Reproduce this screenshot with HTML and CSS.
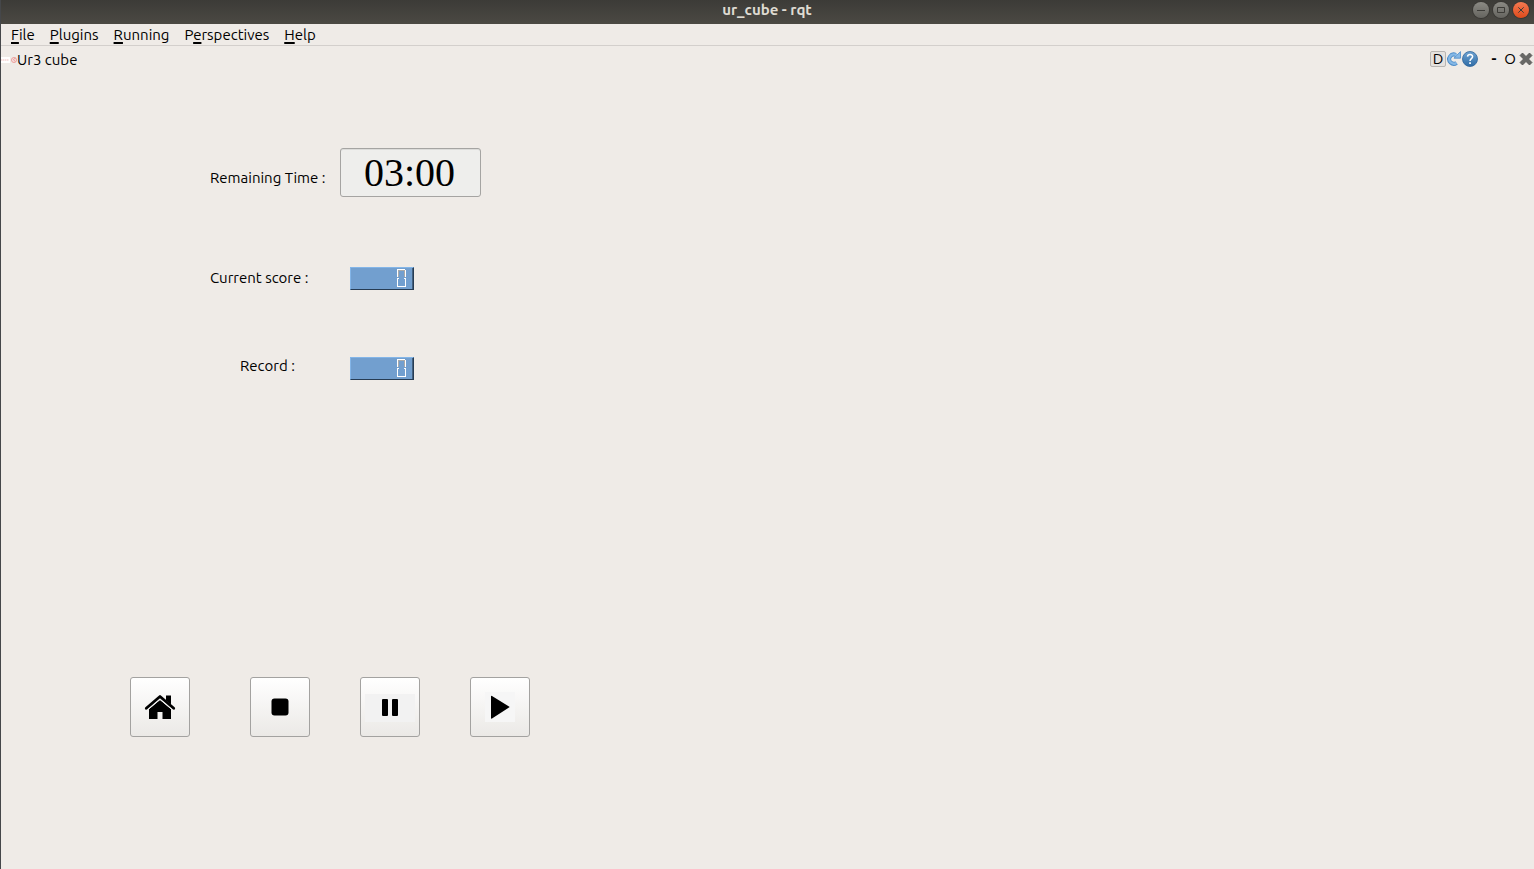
FILE: index.html
```html
<!DOCTYPE html>
<html lang="en">
<head>
<meta charset="utf-8">
<title>ur_cube - rqt</title>
<link rel="stylesheet" href="styles.css">
</head>
<body>
<div class="window">
  <header class="titlebar">
    <h1 class="title">ur_cube - rqt</h1>
    <div class="window-controls">
      <button class="control" aria-label="Minimize"><svg viewBox="0 0 16 16"><path d="M4 8.500h8" /></svg></button>
      <button class="control" aria-label="Maximize"><svg viewBox="0 0 16 16"><path d="M4.500 5.500h7v5h-7z" /></svg></button>
      <button class="control control-close" aria-label="Close"><svg viewBox="0 0 16 16"><path d="M5.300 5.300l5.400 5.400M10.700 5.300l-5.400 5.400" /></svg></button>
    </div>
  </header>
  <nav class="menubar">
    <button class="menu"><u>F</u>ile</button>
    <button class="menu"><u>P</u>lugins</button>
    <button class="menu"><u>R</u>unning</button>
    <button class="menu">P<u>e</u>rspectives</button>
    <button class="menu"><u>H</u>elp</button>
  </nav>
  <section class="dock">
    <header class="dock-bar">
      <svg class="dock-icon" viewBox="0 0 16 16" aria-hidden="true">
        <path fill="#fff" d="M0 5h9v6H0z" />
        <path d="M0 8h8" stroke="#f0bdbb" stroke-width="1" stroke-dasharray="1.500 .5" />
        <circle cx="13" cy="8" r="2.500" fill="#f8e4e2" stroke="#ec9f9c" />
        <path d="M14.500 6l-2 1.500 1.500 2" fill="none" stroke="#e08a88" stroke-width=".8" />
      </svg>
      <h2 class="dock-title">Ur3 cube</h2>
      <div class="dock-tools">
        <button class="tool tool-d">D</button>
        <button class="tool" aria-label="Reload"><svg viewBox="0 0 16 16">
          <path d="M9.800 4A4.600 4.600 0 1 0 10.600 11.800" fill="none" stroke="#4d8cc8" stroke-width="4" />
          <path d="M14.500 .6v6.600H8L10 5z" fill="#85b8e6" stroke="#4d8cc8" stroke-width=".8" />
          <path d="M10.600 4.400A4.600 4.600 0 1 0 10.400 11.900" fill="none" stroke="#85b8e6" stroke-width="2.400" />
        </svg></button>
        <button class="tool" aria-label="Help"><svg viewBox="0 0 16 16">
          <defs><linearGradient id="help" x2="0" y2="1"><stop stop-color="#6fa3d2" /><stop offset="1" stop-color="#2f6ca6" /></linearGradient></defs>
          <circle cx="8" cy="8" r="7.500" fill="url(#help)" stroke="#2e659b" stroke-width=".8" />
          <path d="M5.500 5.700C5.800 2.900 10.700 2.900 10.600 5.800C10.500 7.700 8 7.700 8 10" fill="none" stroke="#fff" stroke-width="1.500" />
          <path d="M7.200 11.200h1.700v1.700H7.200z" fill="#fff" />
        </svg></button>
        <button class="tool tool-dash">-</button>
        <button class="tool">O</button>
        <button class="tool" aria-label="Close panel"><svg viewBox="0 0 16 16">
          <path d="M4.500 2L8 5.500L11.500 2L14 4.500L10.500 8L14 11.500L11.500 14L8 10.500L4.500 14L2 11.500L5.500 8L2 4.500z" fill="#686866" stroke="#50504f" stroke-width=".8" stroke-linejoin="round" />
        </svg></button>
      </div>
    </header>
    <main class="panel">
      <div class="row row-time">
        <label class="label" for="time">Remaining Time :</label>
        <input class="time" id="time" value="03:00" readonly>
      </div>
      <div class="row row-score">
        <span class="label" id="score-label">Current score :</span>
        <div class="lcd" role="img" aria-labelledby="score-label">
          <svg class="digit" viewBox="0 0 10 20"><path d="M2.500 9V2.500H8.500V9" class="seg seg-shade" /><path d="M1.500 9V1.500H9M9.500 2V9M1.500 11V18.500H9.500V11M.5 10.500H3M8 10.500H10" class="seg" /></svg>
        </div>
      </div>
      <div class="row row-record">
        <span class="label label-record" id="record-label">Record :</span>
        <div class="lcd" role="img" aria-labelledby="record-label">
          <svg class="digit" viewBox="0 0 10 20"><path d="M2.500 9V2.500H8.500V9" class="seg seg-shade" /><path d="M1.500 9V1.500H9M9.500 2V9M1.500 11V18.500H9.500V11M.5 10.500H3M8 10.500H10" class="seg" /></svg>
        </div>
      </div>
      <div class="actions">
        <button class="action action-home" aria-label="Home"><svg viewBox="0 0 58 58">
          <path d="M18 31L29 22L40 31V41H31.500V34H26.500V41H18z" />
          <path d="M35 17.500h5v9l-5-4z" />
          <path d="M15.300 30.300L29 18.500L42.700 30.300" fill="none" stroke="#000" stroke-width="2.800" stroke-linecap="round" stroke-linejoin="round" />
          <path d="M17 31.600L29 21.400L41 31.600" fill="none" stroke="#f3f3f2" stroke-width="1" />
        </svg></button>
        <button class="action" aria-label="Stop"><svg viewBox="0 0 58 58"><rect x="20.500" y="20.500" width="17" height="17" rx="3" /></svg></button>
        <button class="action" aria-label="Pause"><svg viewBox="0 0 58 58"><path d="M4 16h50v28H4z" fill="#f2f2f2" /><rect x="21" y="21" width="6" height="17" rx="1" /><rect x="31" y="21" width="6" height="17" rx="1" /></svg></button>
        <button class="action" aria-label="Play"><svg viewBox="0 0 58 58"><path d="M14 14h30v30H14z" fill="#f6f6f6" /><path d="M20 18.500Q20 17.500 21 18L38 28.500Q39 29 38 29.500L21 40.500Q20 41 20 40z" /></svg></button>
      </div>
    </main>
  </section>
</div>
</body>
</html>
```
FILE: styles.css
```css
* { box-sizing: border-box; }

body {
  margin: 0;
  background: #efebe7;
  color: #000;
  font: 15px/20px Ubuntu, "Noto Sans", sans-serif;
}

button { padding: 0; border: 0; background: none; color: inherit; font: inherit; }
h1, h2 { margin: 0; font-size: inherit; font-weight: normal; }
svg { display: block; }

.window { min-height: 100vh; border-left: 1px solid #45474a; }

.titlebar {
  display: grid;
  grid-template-columns: 1fr auto 1fr;
  align-items: center;
  height: 24px;
  padding: 0 5px 4px 4px;
  background: linear-gradient(#3c3b37, #4b4943);
}
.title { grid-column: 2; color: #dfdbd2; font-size: 15px; font-weight: bold; }
.window-controls { display: flex; justify-content: flex-end; gap: 4px; }
.control {
  width: 16px;
  height: 16px;
  border-radius: 50%;
  background: linear-gradient(#8b8a84, #65645f);
  box-shadow: 0 0 0 1px #393834;
}
.control svg { width: 16px; height: 16px; fill: none; stroke: #3c3b37; }
.control-close { background: linear-gradient(#f47951, #df4b1c); }

.menubar {
  display: flex;
  gap: 15px;
  height: 22px;
  padding-left: 10px;
  border-bottom: 1px solid #d3cfcc;
}
.menu u { text-decoration-thickness: 2px; text-underline-offset: 2px; text-decoration-skip-ink: none; }

.dock-bar { display: flex; align-items: center; height: 27px; }
.dock-icon { width: 16px; height: 16px; }
.dock-tools { display: flex; align-items: center; margin-left: auto; padding-bottom: 1px; }
.tool { width: 16px; height: 16px; line-height: 16px; }
.tool svg { width: 16px; height: 16px; }
.tool-d { border: 1px solid #b8b5b2; border-radius: 2px; background: #e5e2df; line-height: 14px; }
.tool-dash { margin-left: 8px; font-weight: bold; }

.panel { padding: 75px 0 40px 129px; }
.row { display: flex; align-items: center; padding-left: 80px; }
.label { width: 140px; white-space: nowrap; }
.label-record { padding-left: 30px; }
.row-time .label { width: 130px; padding-top: 10px; }
.row-score { margin-top: 70px; }
.row-score .label { padding-bottom: 2px; }
.row-record { margin-top: 66px; }
.row-record .label { padding-bottom: 4px; }

.time {
  width: 141px;
  height: 49px;
  padding: 0 4px 0 2px;
  border: 1px solid #a5a4a2;
  border-radius: 3px;
  background: #eeeeec;
  box-shadow: inset 0 1px #dcdcda;
  color: #000;
  font: 40px "Liberation Serif", serif;
  text-align: center;
}

.lcd {
  display: flex;
  justify-content: flex-end;
  width: 64px;
  height: 23px;
  padding-right: 7px;
  border: 1px solid;
  border-color: #83b5e8 #263c54 #263c54 #83b5e8;
  background: #729fcf;
  box-shadow: inset -1px 0 #45617f;
}
.digit { width: 10px; height: 20px; }
.seg { fill: none; stroke: #fff; stroke-width: 1; shape-rendering: crispEdges; }
.seg-shade { stroke: #a9a9a9; }

.actions { display: flex; gap: 50px; margin-top: 297px; }
.action {
  width: 60px;
  height: 60px;
  border: 1px solid #a3a2a0;
  border-radius: 3px;
  background: linear-gradient(#fff, #ebe9e6);
}
.action svg { width: 58px; height: 58px; }
.action-home { margin-right: 10px; }
```
